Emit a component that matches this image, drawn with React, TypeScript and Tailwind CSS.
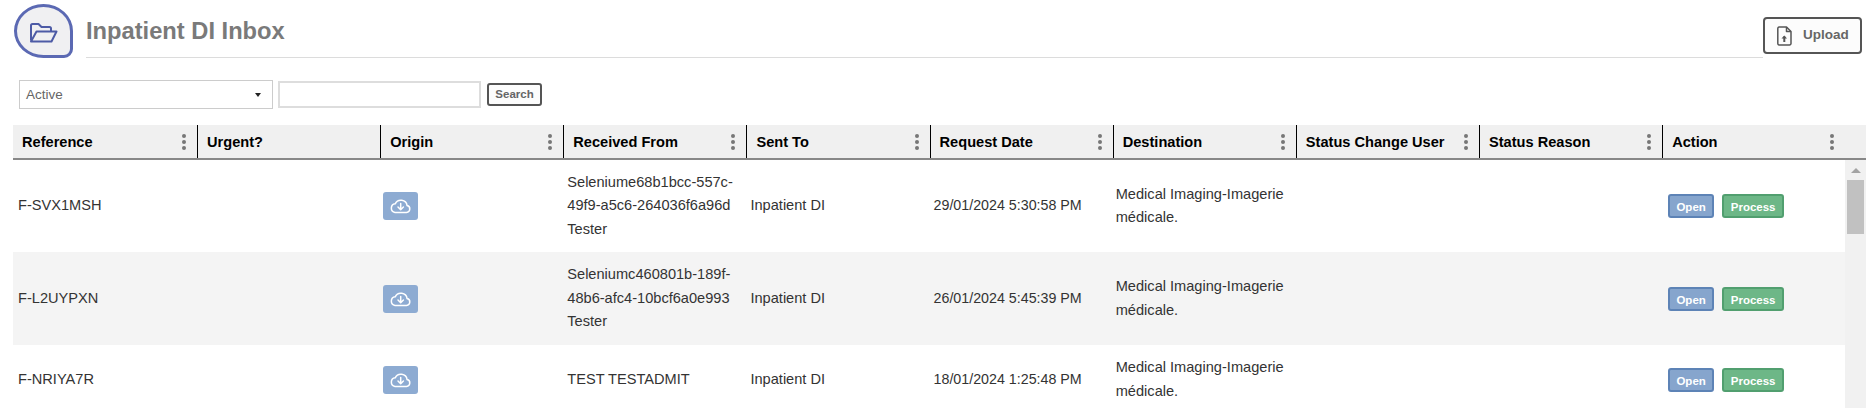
const columns = [
  "Reference",
  "Urgent?",
  "Origin",
  "Received From",
  "Sent To",
  "Request Date",
  "Destination",
  "Status Change User",
  "Status Reason",
  "Action",
];

const rows = [
  {
    ref: "F-SVX1MSH",
    from: "Seleniume68b1bcc-557c-49f9-a5c6-264036f6a96d Tester",
    date: "29/01/2024 5:30:58 PM",
  },
  {
    ref: "F-L2UYPXN",
    from: "Seleniumc460801b-189f-48b6-afc4-10bcf6a0e993 Tester",
    date: "26/01/2024 5:45:39 PM",
  },
  {
    ref: "F-NRIYA7R",
    from: "TEST TESTADMIT",
    date: "18/01/2024 1:25:48 PM",
  },
];

function FolderIcon() {
  return (
    <svg width="29" height="20" viewBox="0 0 29 20" fill="none" stroke="#4d5ba6" strokeWidth="2" strokeLinejoin="round">
      <path d="M2 17.500V2.500A1.500 1.500 0 0 1 3.500 1h6l3 3h8a1.500 1.500 0 0 1 1.500 1.500V8" />
      <path d="M2 18.500L7.500 8.500H27.500L22.500 18.500Z" />
    </svg>
  );
}

function CloudIcon() {
  return (
    <svg width="21" height="16" viewBox="0 0 21 16" fill="none" stroke="white" strokeWidth="1.500" strokeLinecap="round" strokeLinejoin="round">
      <path d="M5 14.500h11.500a3.500 3.500 0 0 0 .6-6.900A6.300 6.300 0 0 0 5.200 5.800 4.400 4.400 0 0 0 5 14.500z" />
      <path d="M10.700 5.500v6M8 9l2.700 2.700L13.400 9" />
    </svg>
  );
}

function UploadIcon() {
  return (
    <svg width="15" height="20" viewBox="0 0 15 20" fill="none" stroke="#555" strokeWidth="1.500" strokeLinejoin="round">
      <path d="M2 1h7.500L14 5.500V17.500A1.500 1.500 0 0 1 12.500 19H2A1.500 1.500 0 0 1 .8 17.500V2.500A1.500 1.500 0 0 1 2 1z" />
      <path d="M9.500 1v4.500H14" />
      <path d="M7.300 16V10.500" strokeWidth="2" />
      <path d="M4.500 12.500L7.300 9.500L10 12.500Z" fill="#555" stroke="none" />
    </svg>
  );
}

function Kebab() {
  return (
    <div className="flex flex-col gap-[2px] ml-auto mr-[11px] pt-[1px]">
      <span className="w-[4px] h-[4px] rounded-full bg-[#777]" />
      <span className="w-[4px] h-[4px] rounded-full bg-[#777]" />
      <span className="w-[4px] h-[4px] rounded-full bg-[#777]" />
    </div>
  );
}

export default function App() {
  return (
    <div className="w-[1873px] h-[408px] overflow-hidden bg-white text-[14.600px] text-[#333] font-['Liberation_Sans',Arial,sans-serif]">
      <div className="flex items-start pl-[14px] pr-[11px] pt-[4px] h-[80px]">
        <div className="w-[59px] h-[54px] shrink-0 rounded-[50%_50%_9px_50%] border-[3px] border-[#5b69b3] bg-[#f0f0f2] flex items-center justify-center pt-[3px]">
          <FolderIcon />
        </div>
        <div className="flex-1 ml-[13px] h-[54px] border-b border-[#dcdcdc] flex items-center">
          <h1 className="text-[23.700px] font-bold text-[#7a7a7a] pt-[3px]">Inpatient DI Inbox</h1>
        </div>
        <button className="mt-[13px] w-[99px] h-[37px] border-2 border-[#555] rounded-[4px] bg-[#fcfcfc] flex items-center pl-[12px] gap-[11px] text-[13.500px] font-bold text-[#666]">
          <UploadIcon />
          Upload
        </button>
      </div>

      <div className="flex items-center pl-[19px] h-[29px]">
        <div className="w-[254px] h-[29px] border border-[#ccc] flex items-center justify-between pl-[6px] pr-[11px] text-[13.500px] text-[#666]">
          <span className="pt-[1px]">Active</span>
          <span className="w-0 h-0 border-x-[3.500px] border-x-transparent border-t-[4px] border-t-[#222]" />
        </div>
        <input className="ml-[5px] w-[203px] h-[27px] border-2 border-[#ddd] bg-white outline-none" />
        <button className="ml-[6px] w-[55px] h-[23px] border-2 border-[#555] rounded-[3px] bg-[#fcfcfc] text-[11.500px] font-bold text-[#666]">
          Search
        </button>
      </div>

      <div className="mt-[16px] ml-[13px] w-[1853px]">
        <div className="flex h-[35px] bg-[#f0f0f0] border-b-2 border-[#888] pr-[21px]">
          {columns.map((col, i) => (
            <div
              key={col}
              className={`flex items-center pl-[9px] font-bold text-black ${i === 0 ? "w-[184px]" : i === 9 ? "flex-1 border-l border-black" : "w-[183.150px] border-l border-black"}`}
            >
              <span className="whitespace-nowrap pt-[3px]">{col}</span>
              {i !== 1 ? <Kebab /> : null}
            </div>
          ))}
        </div>
        <div className="flex">
          <div className="flex-1 min-w-0">
            {rows.map((row, i) => (
              <div
                key={row.ref}
                className={`flex items-center leading-[23.500px] ${i === 2 ? "h-[69px]" : i === 0 ? "h-[92px]" : "h-[93px]"} ${i === 1 ? "bg-[#f4f4f4]" : ""}`}
              >
                <div className="w-[184px] pl-[5px]">{row.ref}</div>
                <div className="w-[183.150px]" />
                <div className="w-[183.150px] pl-[3px]">
                  <div className="w-[35px] h-[28px] rounded-[3px] bg-[#8dabd2] flex items-center justify-center">
                    <CloudIcon />
                  </div>
                </div>
                <div className="w-[183.150px] pl-[4px] pr-[4px] break-words">{row.from}</div>
                <div className="w-[183.150px] pl-[4px]">Inpatient DI</div>
                <div className="w-[183.150px] pl-[4px] text-[14.250px]">{row.date}</div>
                <div className="w-[183.150px] pl-[3px] pr-[4px]">Medical Imaging-Imagerie médicale.</div>
                <div className="w-[183.150px]" />
                <div className="w-[183.150px]" />
                <div className="flex-1 pl-[6px] flex gap-[8px]">
                  <button className="w-[46px] h-[24px] rounded-[3px] border-2 border-[#5d83b6] bg-[#86a5cd] text-white text-[11.500px] font-bold">
                    Open
                  </button>
                  <button className="w-[62px] h-[24px] rounded-[3px] border-2 border-[#519f6f] bg-[#6db787] text-white text-[11.500px] font-bold">
                    Process
                  </button>
                </div>
              </div>
            ))}
          </div>
          <div className="w-[21px] h-[248px] shrink-0 bg-[#f1f1f1] flex flex-col items-center">
            <span className="mt-[8px] w-0 h-0 border-x-[5px] border-x-transparent border-b-[5px] border-b-[#a3a3a3]" />
            <div className="mt-[7px] w-[17px] h-[54px] bg-[#c1c1c1]" />
          </div>
        </div>
      </div>
    </div>
  );
}
